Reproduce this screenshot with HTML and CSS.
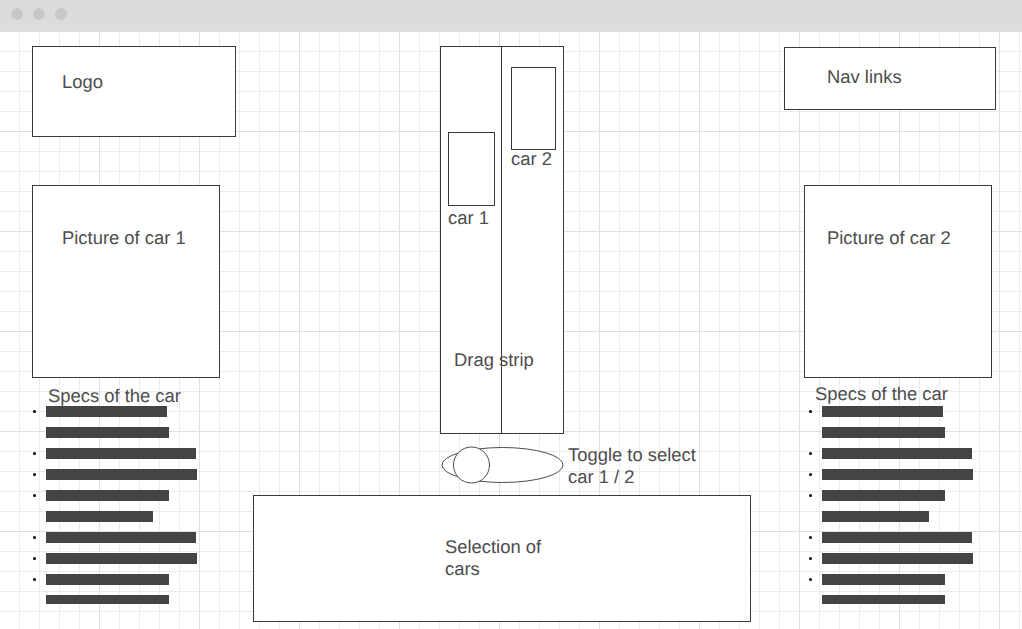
FILE: index.html
```html
<!DOCTYPE html>
<html lang="en">
<head>
<meta charset="utf-8">
<title>Car drag race wireframe</title>
<link rel="stylesheet" href="styles.css">
</head>
<body>
<div class="window">
  <header class="titlebar">
    <span class="light"></span>
    <span class="light"></span>
    <span class="light"></span>
  </header>
  <main class="canvas">
    <section class="col col-left">
      <div class="box logo-box"><span class="label">Logo</span></div>
      <div class="box pic-box pic-left"><span class="label">Picture of car 1</span></div>
      <h2 class="specs-title title-left">Specs of the car</h2>
      <ul class="specs specs-left">
        <li class="dot"><span class="bar" style="width:121px"></span></li>
        <li><span class="bar" style="width:123px"></span></li>
        <li class="dot"><span class="bar" style="width:150px"></span></li>
        <li class="dot"><span class="bar" style="width:151px"></span></li>
        <li class="dot"><span class="bar" style="width:123px"></span></li>
        <li><span class="bar" style="width:107px"></span></li>
        <li class="dot"><span class="bar" style="width:150px"></span></li>
        <li class="dot"><span class="bar" style="width:151px"></span></li>
        <li class="dot"><span class="bar" style="width:123px"></span></li>
        <li><span class="bar" style="width:123px"></span></li>
      </ul>
    </section>

    <section class="col col-center">
      <div class="strip">
        <div class="lane lane-1">
          <div class="car car-1"></div>
          <span class="car-label">car 1</span>
        </div>
        <div class="lane lane-2">
          <div class="car car-2"></div>
          <span class="car-label">car 2</span>
        </div>
        <span class="strip-label">Drag strip</span>
      </div>
      <div class="toggle-row">
        <svg class="toggle" width="124" height="40" viewBox="0 0 124 40" aria-hidden="true">
          <ellipse cx="61.5" cy="19" rx="60.5" ry="17.5" fill="#fff" stroke="#4d4d4d" stroke-width="1"/>
          <circle cx="30.5" cy="19" r="18" fill="#fff" stroke="#4d4d4d" stroke-width="1"/>
        </svg>
        <p class="toggle-label">Toggle to select car 1 / 2</p>
      </div>
      <div class="box selection"><p class="sel-label">Selection of cars</p></div>
    </section>

    <section class="col col-right">
      <div class="box nav-box"><span class="label">Nav links</span></div>
      <div class="box pic-box pic-right"><span class="label">Picture of car 2</span></div>
      <h2 class="specs-title title-right">Specs of the car</h2>
      <ul class="specs specs-right">
        <li class="dot"><span class="bar" style="width:121px"></span></li>
        <li><span class="bar" style="width:123px"></span></li>
        <li class="dot"><span class="bar" style="width:150px"></span></li>
        <li class="dot"><span class="bar" style="width:151px"></span></li>
        <li class="dot"><span class="bar" style="width:123px"></span></li>
        <li><span class="bar" style="width:107px"></span></li>
        <li class="dot"><span class="bar" style="width:150px"></span></li>
        <li class="dot"><span class="bar" style="width:151px"></span></li>
        <li class="dot"><span class="bar" style="width:123px"></span></li>
        <li><span class="bar" style="width:123px"></span></li>
      </ul>
    </section>
  </main>
</div>
</body>
</html>
```

FILE: styles.css
```css
* {
  box-sizing: border-box;
}

html, body {
  margin: 0;
  padding: 0;
  overflow: hidden;
}

body {
  font-family: "Liberation Sans", Arial, sans-serif;
  font-size: 18.4px;
  color: #4d4d4d;
  background: #fff;
  text-rendering: geometricPrecision;
}

.window {
  width: 1022px;
  height: 629px;
}

.titlebar {
  height: 31px;
  background: #dcdcdc;
  display: flex;
  gap: 10px;
  padding: 8px 0 0 11px;
}

.light {
  width: 12px;
  height: 12px;
  border-radius: 50%;
  background: #c8c8c8;
}

.canvas {
  height: 598px;
  display: grid;
  grid-template-columns: 253px 498px 1fr;
  align-items: start;
  background-color: #fff;
  background-image:
    linear-gradient(to right, transparent 99px, #e0e0e0 99px, #e0e0e0 100px),
    linear-gradient(to bottom, #e0e0e0 0, #e0e0e0 1px, transparent 1px),
    linear-gradient(to right, transparent 19px, #ececec 19px, #ececec 20px),
    linear-gradient(to bottom, #ececec 0, #ececec 1px, transparent 1px);
  background-size: 100px 100px, 100px 100px, 20px 20px, 20px 20px;
}

.col {
  display: flex;
  flex-direction: column;
  align-items: flex-start;
}

.box {
  border: 1px solid #3a3a3a;
  background: #fff;
}

.label {
  display: block;
  line-height: 20px;
  white-space: nowrap;
}

/* left column */
.col-left {
  padding-left: 32px;
}

.logo-box {
  width: 204px;
  height: 91px;
  margin-top: 15px;
  padding: 25px 0 0 29px;
}

.pic-box {
  width: 188px;
  height: 193px;
}

.pic-left {
  margin-top: 48px;
  padding: 42px 0 0 29px;
}

.specs-title {
  margin: 0;
  font-size: 18.4px;
  font-weight: normal;
  line-height: 20px;
  white-space: nowrap;
}

.title-left {
  margin-top: 8px;
  padding-left: 16px;
}

.specs {
  list-style: none;
  margin: 0;
  display: flex;
  flex-direction: column;
  gap: 10px;
}

.specs li {
  display: flex;
  align-items: center;
  height: 11px;
}

.specs li::before {
  content: "";
  width: 3px;
  height: 3px;
  margin-right: 10px;
  border-radius: 50%;
  background: #000;
  visibility: hidden;
}

.specs li.dot::before {
  visibility: visible;
}

.specs li:last-child {
  height: 9px;
}

.bar {
  display: block;
  height: 100%;
  background: #444;
}

.specs-left {
  padding-left: 1px;
}

/* center column */
.strip {
  position: relative;
  display: flex;
  width: 124px;
  height: 388px;
  margin: 15px 0 0 187px;
  border: 1px solid #3a3a3a;
  background: #fff;
}

.lane {
  display: flex;
  flex-direction: column;
  align-items: flex-start;
}

.lane-1 {
  width: 61px;
  border-right: 1px solid #3a3a3a;
}

.lane-2 {
  flex: 1;
}

.car {
  border: 1px solid #3a3a3a;
  background: #fff;
}

.car-1 {
  width: 47px;
  height: 74px;
  margin: 85px 0 0 7px;
}

.car-2 {
  width: 45px;
  height: 83px;
  margin: 20px 0 0 9px;
}

.car-label {
  display: block;
  line-height: 18px;
  white-space: nowrap;
}

.lane-1 .car-label {
  margin: 3px 0 0 7px;
}

.lane-2 .car-label {
  margin: 0 0 0 9px;
}

.strip-label {
  position: absolute;
  left: 13px;
  top: 303px;
  line-height: 20px;
  white-space: nowrap;
}

.toggle-row {
  display: flex;
  align-items: flex-start;
  height: 51px;
  margin-top: 10px;
}

.toggle {
  display: block;
  margin: 2px 0 0 188px;
}

.toggle-label {
  margin: 0 0 0 3px;
  width: 145px;
  line-height: 21.6px;
}

.selection {
  width: 498px;
  height: 127px;
  padding: 40px 0 0 191px;
}

.sel-label {
  margin: 0;
  width: 102px;
  line-height: 21.6px;
}

/* right column */
.col-right {
  padding-left: 33px;
}

.nav-box {
  width: 212px;
  height: 63px;
  margin-top: 16px;
  padding: 19px 0 0 42px;
}

.pic-right {
  margin: 75px 0 0 20px;
  padding: 42px 0 0 22px;
}

.title-right {
  margin: 6px 0 2px;
  padding-left: 31px;
}

.specs-right {
  padding-left: 25px;
}
```
